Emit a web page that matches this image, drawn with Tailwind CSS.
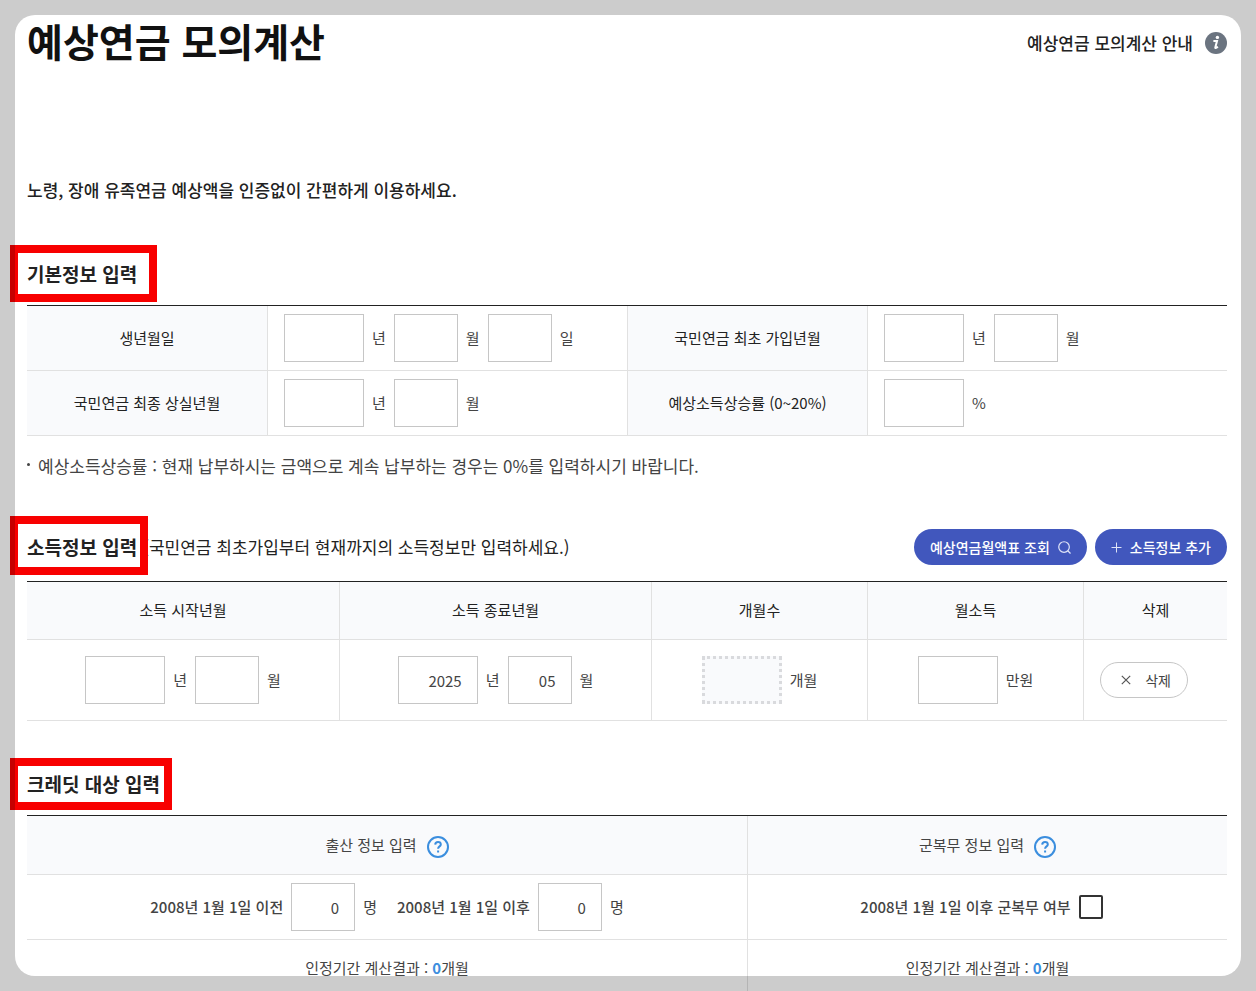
<!DOCTYPE html>
<html lang="ko">
<head>
    <meta charset="UTF-8">
    <meta name="viewport" content="width=device-width, initial-scale=1.0">
    <title>예상연금 모의계산</title>
    <script src="https://cdn.jsdelivr.net/npm/@tailwindcss/browser@4"></script>
</head>
<body class="h-screen overflow-hidden bg-white font-['Noto_Sans_CJK_KR',sans-serif] text-[15px] text-[#444]">
    <main class="pl-[27px] pr-[29px]">
        <header class="flex h-[86px] items-center justify-between">
            <h1 class="pb-1.5 text-[39px] leading-[56px] font-bold text-[#111]">예상연금 모의계산</h1>
            <a href="#guide" class="flex items-center gap-3 text-[17px] leading-[26px] font-medium text-[#222]">
                예상연금 모의계산 안내
                <svg class="size-[22px]" viewBox="0 0 22 22">
                    <circle cx="11" cy="11" r="11" fill="#6b7480"/>
                    <circle cx="12.4" cy="5.4" r="1.7" fill="#fff"/>
                    <path d="M8.4 9h3.6l-1.7 6.4c-.2.9.6.9 2.6-.6" fill="none" stroke="#fff" stroke-width="2"/>
                </svg>
            </a>
        </header>

        <p class="mt-[91px] text-[17px] leading-[26px] font-medium text-[#222]">노령, 장애 유족연금 예상액을 인증없이 간편하게 이용하세요.</p>

        <!-- 기본정보 -->
        <section class="mt-[57px]">
            <div class="relative flex">
                <h2 class="text-[19px] leading-[28px] font-bold text-[#222]">기본정보 입력</h2>
                <span class="absolute -top-[15px] -left-[17px] h-[57px] w-[147px] border-8 border-[#f80000]"></span>
            </div>
            <table class="mt-[17px] w-full table-fixed border-separate border-spacing-0 border-t border-[#222]">
                <colgroup>
                    <col class="w-1/5"><col class="w-3/10"><col class="w-1/5"><col class="w-3/10">
                </colgroup>
                <tbody>
                    <tr>
                        <th scope="row" class="h-[65px] border-b border-[#e1e1e1] bg-[#f9fafc] font-normal text-[#222]">생년월일</th>
                        <td class="border-b border-l border-[#e1e1e1] px-4">
                            <div class="flex items-center gap-2">
                                <input id="birthYear" type="text" class="h-12 w-20 border border-[#c6c6c6] px-[15px] text-right">
                                <label for="birthYear">년</label>
                                <input id="birthMonth" type="text" class="h-12 w-16 border border-[#c6c6c6] px-[15px] text-right">
                                <label for="birthMonth">월</label>
                                <input id="birthDay" type="text" class="h-12 w-16 border border-[#c6c6c6] px-[15px] text-right">
                                <label for="birthDay">일</label>
                            </div>
                        </td>
                        <th scope="row" class="border-b border-l border-[#e1e1e1] bg-[#f9fafc] font-normal text-[#222]">국민연금 최초 가입년월</th>
                        <td class="border-b border-l border-[#e1e1e1] px-4">
                            <div class="flex items-center gap-2">
                                <input id="joinYear" type="text" class="h-12 w-20 border border-[#c6c6c6] px-[15px] text-right">
                                <label for="joinYear">년</label>
                                <input id="joinMonth" type="text" class="h-12 w-16 border border-[#c6c6c6] px-[15px] text-right">
                                <label for="joinMonth">월</label>
                            </div>
                        </td>
                    </tr>
                    <tr>
                        <th scope="row" class="h-[65px] border-b border-[#e1e1e1] bg-[#f9fafc] font-normal text-[#222]">국민연금 최종 상실년월</th>
                        <td class="border-b border-l border-[#e1e1e1] px-4">
                            <div class="flex items-center gap-2">
                                <input id="lossYear" type="text" class="h-12 w-20 border border-[#c6c6c6] px-[15px] text-right">
                                <label for="lossYear">년</label>
                                <input id="lossMonth" type="text" class="h-12 w-16 border border-[#c6c6c6] px-[15px] text-right">
                                <label for="lossMonth">월</label>
                            </div>
                        </td>
                        <th scope="row" class="border-b border-l border-[#e1e1e1] bg-[#f9fafc] font-normal text-[#222]">예상소득상승률 (0~20%)</th>
                        <td class="border-b border-l border-[#e1e1e1] px-4">
                            <div class="flex items-center gap-2">
                                <input id="raiseRate" type="text" class="h-12 w-20 border border-[#c6c6c6] px-[15px] text-right">
                                <label for="raiseRate">%</label>
                            </div>
                        </td>
                    </tr>
                </tbody>
            </table>
            <ul class="mt-[17px] text-[17px] leading-[26px]">
                <li class="flex gap-2">
                    <span class="mt-[10px] size-[3px] rounded-full bg-[#444]"></span>
                    예상소득상승률 : 현재 납부하시는 금액으로 계속 납부하는 경우는 0%를 입력하시기 바랍니다.
                </li>
            </ul>
        </section>

        <!-- 소득정보 -->
        <section class="mt-[50px]">
            <div class="relative flex h-9 items-center justify-between">
                <div class="flex items-center gap-1.5">
                    <h2 class="text-[19px] leading-[28px] font-bold text-[#222]">소득정보 입력</h2>
                    <p class="text-[17px] leading-[26px] text-[#222]">(국민연금 최초가입부터 현재까지의 소득정보만 입력하세요.)</p>
                </div>
                <div class="flex gap-2">
                    <button type="button" class="flex h-9 items-center gap-2 rounded-full bg-[#4157bd] px-4 text-[14px] font-medium text-white">
                        예상연금월액표 조회
                        <svg class="size-[13px]" viewBox="0 0 14 14" fill="none" stroke="#dfe4f7" stroke-width="1.3">
                            <circle cx="6.5" cy="6.5" r="5.7"/>
                            <path d="M10.5 10.5 13.5 13.5"/>
                        </svg>
                    </button>
                    <button type="button" class="flex h-9 items-center gap-2 rounded-full bg-[#4157bd] px-4 text-[14px] font-medium text-white">
                        <svg class="size-[11px]" viewBox="0 0 11 11" fill="none" stroke="#dfe4f7">
                            <path d="M5.5.5v10M.5 5.5h10"/>
                        </svg>
                        소득정보 추가
                    </button>
                </div>
                <span class="absolute -top-[13px] -left-[17px] h-[59px] w-[138px] border-8 border-[#f80000]"></span>
            </div>
            <table class="mt-4 w-full table-fixed border-separate border-spacing-0 border-t border-[#222]">
                <colgroup>
                    <col class="w-[26%]"><col class="w-[26%]"><col class="w-[18%]"><col class="w-[18%]"><col class="w-[12%]">
                </colgroup>
                <thead>
                    <tr class="text-[#222]">
                        <th scope="col" class="h-[58px] border-b border-[#e1e1e1] bg-[#f9fafc] font-normal">소득 시작년월</th>
                        <th scope="col" class="border-b border-l border-[#e1e1e1] bg-[#f9fafc] font-normal">소득 종료년월</th>
                        <th scope="col" class="border-b border-l border-[#e1e1e1] bg-[#f9fafc] font-normal">개월수</th>
                        <th scope="col" class="border-b border-l border-[#e1e1e1] bg-[#f9fafc] font-normal">월소득</th>
                        <th scope="col" class="border-b border-l border-[#e1e1e1] bg-[#f9fafc] font-normal">삭제</th>
                    </tr>
                </thead>
                <tbody>
                    <tr>
                        <td class="h-[81px] border-b border-[#e1e1e1]">
                            <div class="flex items-center justify-center gap-2">
                                <input id="startYear" type="text" class="h-12 w-20 border border-[#c6c6c6] px-[15px] text-right">
                                <label for="startYear">년</label>
                                <input id="startMonth" type="text" class="h-12 w-16 border border-[#c6c6c6] px-[15px] text-right">
                                <label for="startMonth">월</label>
                            </div>
                        </td>
                        <td class="border-b border-l border-[#e1e1e1]">
                            <div class="flex items-center justify-center gap-2">
                                <input id="endYear" type="text" value="2025" class="h-12 w-20 border border-[#c6c6c6] px-[15px] text-right">
                                <label for="endYear">년</label>
                                <input id="endMonth" type="text" value="05" class="h-12 w-16 border border-[#c6c6c6] px-[15px] text-right">
                                <label for="endMonth">월</label>
                            </div>
                        </td>
                        <td class="border-b border-l border-[#e1e1e1]">
                            <div class="flex items-center justify-center gap-2">
                                <input id="months" type="text" disabled class="h-12 w-20 border-3 border-dotted border-[#d9dadd] bg-[#f9fafc] px-[13px] text-right">
                                <label for="months">개월</label>
                            </div>
                        </td>
                        <td class="border-b border-l border-[#e1e1e1]">
                            <div class="flex items-center justify-center gap-2">
                                <input id="income" type="text" class="h-12 w-20 border border-[#c6c6c6] px-[15px] text-right">
                                <label for="income">만원</label>
                            </div>
                        </td>
                        <td class="border-b border-l border-[#e1e1e1] px-4">
                            <button type="button" class="flex h-9 w-[88px] items-center justify-end gap-[14px] rounded-full border border-[#c6c6c6] pr-4 text-[14px]">
                                <svg class="size-[10px]" viewBox="0 0 10 10" fill="none" stroke="#555" stroke-width="1.2">
                                    <path d="M.8.8l8.4 8.4M9.2.8.8 9.2"/>
                                </svg>
                                삭제
                            </button>
                        </td>
                    </tr>
                </tbody>
            </table>
        </section>

        <!-- 크레딧 대상 -->
        <section class="mt-[49px]">
            <div class="relative flex">
                <h2 class="text-[19px] leading-[28px] font-bold text-[#222]">크레딧 대상 입력</h2>
                <span class="absolute -top-3 -left-[17px] h-[52px] w-[162px] border-8 border-[#f80000]"></span>
            </div>
            <table class="mt-[17px] w-full table-fixed border-separate border-spacing-0 border-t border-[#222]">
                <colgroup>
                    <col class="w-3/5"><col class="w-2/5">
                </colgroup>
                <thead>
                    <tr>
                        <th scope="col" class="h-[59px] border-b border-[#e1e1e1] bg-[#f9fafc] font-normal">
                            <div class="flex items-center justify-center gap-2.5">
                                출산 정보 입력
                                <button type="button" aria-label="출산 정보 도움말" class="pt-1">
                                    <svg class="size-[22px]" viewBox="0 0 22 22" fill="none" stroke="#3b8ede" stroke-width="2">
                                        <circle cx="11" cy="11" r="10"/>
                                        <path d="M8.2 8.6c.1-1.7 1.2-2.6 2.8-2.6 1.7 0 2.8 1 2.8 2.4 0 2-2.7 2-2.7 4.4M11.1 14.4v2.1"/>
                                    </svg>
                                </button>
                            </div>
                        </th>
                        <th scope="col" class="border-b border-l border-[#e1e1e1] bg-[#f9fafc] font-normal">
                            <div class="flex items-center justify-center gap-2.5">
                                군복무 정보 입력
                                <button type="button" aria-label="군복무 정보 도움말" class="pt-1">
                                    <svg class="size-[22px]" viewBox="0 0 22 22" fill="none" stroke="#3b8ede" stroke-width="2">
                                        <circle cx="11" cy="11" r="10"/>
                                        <path d="M8.2 8.6c.1-1.7 1.2-2.6 2.8-2.6 1.7 0 2.8 1 2.8 2.4 0 2-2.7 2-2.7 4.4M11.1 14.4v2.1"/>
                                    </svg>
                                </button>
                            </div>
                        </th>
                    </tr>
                </thead>
                <tbody>
                    <tr>
                        <td class="h-[65px] border-b border-[#e1e1e1]">
                            <div class="flex items-center justify-center gap-5">
                                <div class="flex items-center gap-2">
                                    <label for="birthBefore" class="font-medium">2008년 1월 1일 이전</label>
                                    <input id="birthBefore" type="text" value="0" class="h-12 w-16 border border-[#c6c6c6] px-[15px] text-right">
                                    <span>명</span>
                                </div>
                                <div class="flex items-center gap-2">
                                    <label for="birthAfter" class="font-medium">2008년 1월 1일 이후</label>
                                    <input id="birthAfter" type="text" value="0" class="h-12 w-16 border border-[#c6c6c6] px-[15px] text-right">
                                    <span>명</span>
                                </div>
                            </div>
                        </td>
                        <td class="border-b border-l border-[#e1e1e1]">
                            <div class="flex items-center justify-center gap-2 pr-3">
                                <label for="military" class="font-medium">2008년 1월 1일 이후 군복무 여부</label>
                                <input id="military" type="checkbox" class="size-6 appearance-none rounded-xs border-2 border-[#333] bg-white checked:bg-[#333]">
                            </div>
                        </td>
                    </tr>
                    <tr>
                        <td class="h-[58px] border-b border-[#e1e1e1] text-center">인정기간 계산결과 : <strong class="text-[#3b8ede]">0</strong>개월</td>
                        <td class="border-b border-l border-[#e1e1e1] text-center">인정기간 계산결과 : <strong class="text-[#3b8ede]">0</strong>개월</td>
                    </tr>
                </tbody>
            </table>
        </section>
    </main>

    <!-- shaded frame over the page edges -->
    <div class="pointer-events-none fixed inset-[15px] rounded-[20px] shadow-[0_0_0_30px_rgba(0,0,0,0.2)]"></div>
</body>
</html>
